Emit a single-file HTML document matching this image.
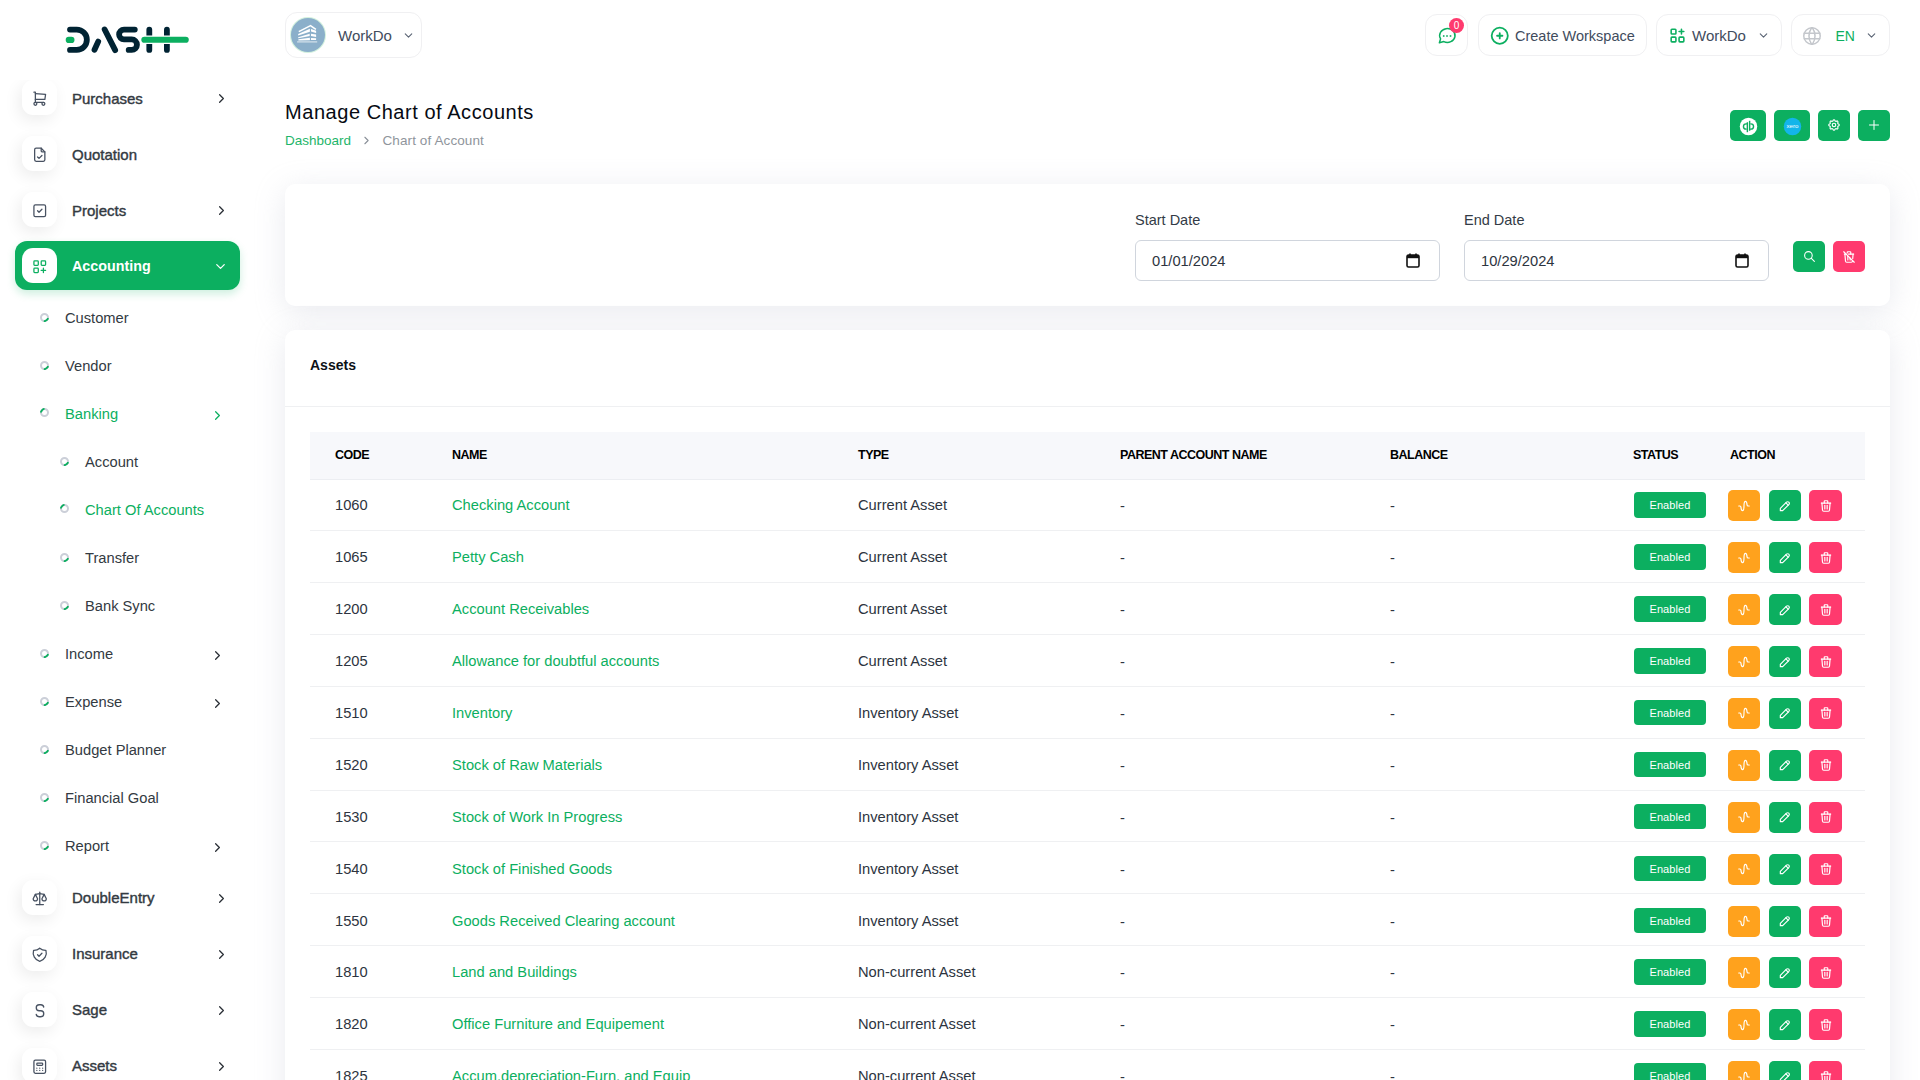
<!DOCTYPE html>
<html><head><meta charset="utf-8">
<style>
*,*:before,*:after{box-sizing:border-box;margin:0;padding:0}
html,body{width:1920px;height:1080px;overflow:hidden}
body{font-family:"Liberation Sans",sans-serif;background:#fff;color:#293240;position:relative;font-size:14px}
.abs{position:absolute}
svg.ti{fill:none;stroke:currentColor;stroke-width:2;stroke-linecap:round;stroke-linejoin:round}
/* sidebar */
#nav{position:absolute;left:0;top:80px;width:270px;height:1000px;overflow:hidden}
.ib{position:absolute;left:22px;width:35px;height:35px;border-radius:11px;background:#fff;box-shadow:-3px 5px 16px rgba(0,0,0,.075);display:flex;align-items:center;justify-content:center;color:#485262}
.tl{position:absolute;left:72px;font-size:15px;font-weight:400;-webkit-text-stroke:.4px currentColor;color:#333a42;white-space:nowrap}
.chev{position:absolute;left:214px;width:15px;height:15px;color:#2a2f36}
.sub{position:absolute;font-size:14.7px;color:#333a42;white-space:nowrap}
.bul{position:absolute;width:9px;height:9px;border-radius:50%;border:2px solid #cbcfd8}
.bul:after{content:"";position:absolute;left:-2px;top:-2px;width:9px;height:9px;border-radius:50%;border:2px solid transparent;border-bottom-color:#0caf60;transform:rotate(-35deg)}
.bul.act:after{transform:rotate(135deg)}
/* header */
.hbox{position:absolute;background:#fff;border:1px solid #f0f0f2;border-radius:12px}
.htxt{position:absolute;font-size:14.5px;color:#414c5d;white-space:nowrap}
/* cards */
.card{position:absolute;left:285px;width:1605px;background:#fff;border-radius:10px;box-shadow:0 6px 30px rgba(182,186,203,.3)}
.gbtn{position:absolute;background:#0caf60;border-radius:5px;color:#fff;display:flex;align-items:center;justify-content:center}
.lbl{position:absolute;font-size:14.5px;color:#333b46;white-space:nowrap}
.inp{position:absolute;top:240px;width:305px;height:41px;border:1px solid #d0d5dd;border-radius:6px;background:#fff}
.inp span{position:absolute;left:16px;top:12px;font-size:14.7px;color:#2d3440}
.inp svg{position:absolute;right:19px;top:12px}
/* table */
.th{position:absolute;top:448px;font-size:12.5px;font-weight:700;color:#000;white-space:nowrap;letter-spacing:-.5px}
.row{position:absolute;left:310px;width:1555px;height:51.8px;border-bottom:1px solid #eff0f2}
.row .c{position:absolute;top:18px;font-size:14.7px;white-space:nowrap;color:#2d3440}
.row .nm{color:#0caf60}
.badge{position:absolute;left:1324px;top:13px;width:72px;height:25.5px;border-radius:4px;background:#0caf60;color:#fff;font-size:11px;text-align:center;line-height:26.5px;letter-spacing:.1px}
.ab{position:absolute;top:11px;width:32px;height:31px;border-radius:5px;display:flex;align-items:center;justify-content:center;color:#fff}
</style></head><body>

<!-- LOGO -->
<svg class="abs" style="left:60px;top:20px" width="140" height="40" viewBox="60 20 140 40">
  <g fill="none" stroke="#002333" stroke-width="5.8" stroke-linecap="round">
    <path d="M70 29.6H76.7A10.15 10.15 0 0 1 76.7 49.9H70"/>
    <path d="M94.5 49.8L98.2 41.6"/>
    <path d="M104.65 29.45L115.15 50.1"/>
    <path d="M134.8 29.6H124A4.9 4.9 0 0 0 124 39.4H131.7A5.25 5.25 0 0 1 131.7 49.9H128.7"/>
    <path d="M149.3 29.65V49.9"/>
    <path d="M166.9 29.65V49.9"/>
  </g>
  <path d="M144.4 39.75H185.7" stroke="#fff" stroke-width="8.6"/>
  <g stroke="#0caf60" stroke-width="6.2" stroke-linecap="round">
    <path d="M68.8 39.9h2.6"/>
    <path d="M144.4 39.75H185.7"/>
  </g>
</svg>

<!-- SIDEBAR NAV -->
<div id="nav">
  <!-- coordinates inside are relative to top:80 -->
  <div class="ib" style="top:0px"><svg class="ti" width="17.5" height="17.5" viewBox="0 0 24 24" style="stroke-width:1.75;margin-top:2px"><circle cx="6" cy="19" r="2"/><circle cx="17" cy="19" r="2"/><path d="M17 17h-11v-14h-2"/><path d="M6 5l14 1l-1 7h-13"/></svg></div>
  <div class="tl" style="top:10px">Purchases</div>
  <svg class="ti chev" style="top:11px" viewBox="0 0 24 24"><path d="M9 6l6 6l-6 6"/></svg>

  <div class="ib" style="top:56px"><svg class="ti" width="17.5" height="17.5" viewBox="0 0 24 24" style="stroke-width:1.75;margin-top:2px"><path d="M14 3v4a1 1 0 0 0 1 1h4"/><path d="M17 21h-10a2 2 0 0 1 -2 -2v-14a2 2 0 0 1 2 -2h7l5 5v11a2 2 0 0 1 -2 2z"/><path d="M9 15l2 2l4 -4"/></svg></div>
  <div class="tl" style="top:66px">Quotation</div>

  <div class="ib" style="top:112px"><svg class="ti" width="17.5" height="17.5" viewBox="0 0 24 24" style="stroke-width:1.75;margin-top:2px"><rect x="4" y="4" width="16" height="16" rx="2"/><path d="M9 12l2 2l4 -4"/></svg></div>
  <div class="tl" style="top:122px">Projects</div>
  <svg class="ti chev" style="top:123px" viewBox="0 0 24 24"><path d="M9 6l6 6l-6 6"/></svg>

  <div class="abs" style="left:15px;top:161px;width:225px;height:49px;border-radius:12px;background:#0caf60;box-shadow:0 4px 8px rgba(12,175,96,.2)"></div>
  <div class="ib" style="top:168px;box-shadow:none;color:#0caf60"><svg class="ti" width="17.5" height="17.5" viewBox="0 0 24 24" style="stroke-width:1.75;margin-top:2px"><rect x="4" y="4" width="6" height="6" rx="1"/><rect x="14" y="4" width="6" height="6" rx="1"/><rect x="4" y="14" width="6" height="6" rx="1"/><path d="M14 17h6m-3 -3v6"/></svg></div>
  <div class="tl" style="top:177.5px;color:#fff;font-weight:700;font-size:14.3px;-webkit-text-stroke:0">Accounting</div>
  <svg class="ti chev" style="top:178.5px;left:213px;color:#fff" viewBox="0 0 24 24"><path d="M6 9l6 6l6 -6"/></svg>
  <div class="bul" style="left:40px;top:233px"></div>
  <div class="sub" style="left:65px;top:230px;">Customer</div>
  <div class="bul" style="left:40px;top:281px"></div>
  <div class="sub" style="left:65px;top:278px;">Vendor</div>
  <div class="bul act" style="left:40px;top:328px"></div>
  <div class="sub" style="left:65px;top:326px;color:#0caf60;">Banking</div>
  <svg class="ti chev" style="left:210px;top:328px;color:#0caf60;" viewBox="0 0 24 24"><path d="M9 6l6 6l-6 6"/></svg>
  <div class="bul" style="left:60px;top:377px"></div>
  <div class="sub" style="left:85px;top:374px;">Account</div>
  <div class="bul act" style="left:60px;top:424px"></div>
  <div class="sub" style="left:85px;top:422px;color:#0caf60;">Chart Of Accounts</div>
  <div class="bul" style="left:60px;top:473px"></div>
  <div class="sub" style="left:85px;top:470px;">Transfer</div>
  <div class="bul" style="left:60px;top:521px"></div>
  <div class="sub" style="left:85px;top:518px;">Bank Sync</div>
  <div class="bul" style="left:40px;top:569px"></div>
  <div class="sub" style="left:65px;top:566px;">Income</div>
  <svg class="ti chev" style="left:210px;top:568px;" viewBox="0 0 24 24"><path d="M9 6l6 6l-6 6"/></svg>
  <div class="bul" style="left:40px;top:617px"></div>
  <div class="sub" style="left:65px;top:614px;">Expense</div>
  <svg class="ti chev" style="left:210px;top:616px;" viewBox="0 0 24 24"><path d="M9 6l6 6l-6 6"/></svg>
  <div class="bul" style="left:40px;top:665px"></div>
  <div class="sub" style="left:65px;top:662px;">Budget Planner</div>
  <div class="bul" style="left:40px;top:713px"></div>
  <div class="sub" style="left:65px;top:710px;">Financial Goal</div>
  <div class="bul" style="left:40px;top:761px"></div>
  <div class="sub" style="left:65px;top:758px;">Report</div>
  <svg class="ti chev" style="left:210px;top:760px;" viewBox="0 0 24 24"><path d="M9 6l6 6l-6 6"/></svg>
  <div class="ib" style="top:800px"><svg class="ti" width="17.5" height="17.5" viewBox="0 0 24 24" style="stroke-width:1.75;margin-top:2px"><path d="M7 20l10 0"/><path d="M6 6l6 -1l6 1"/><path d="M12 3l0 17"/><path d="M9 12l-3 -6l-3 6a3 3 0 0 0 6 0"/><path d="M21 12l-3 -6l-3 6a3 3 0 0 0 6 0"/></svg></div>
  <div class="tl" style="top:809px">DoubleEntry</div>
  <svg class="ti chev" style="top:811px" viewBox="0 0 24 24"><path d="M9 6l6 6l-6 6"/></svg>
  <div class="ib" style="top:856px"><svg class="ti" width="17.5" height="17.5" viewBox="0 0 24 24" style="stroke-width:1.75;margin-top:2px"><path d="M9 12l2 2l4 -4"/><path d="M12 3a12 12 0 0 0 8.5 3a12 12 0 0 1 -8.5 15a12 12 0 0 1 -8.5 -15a12 12 0 0 0 8.5 -3"/></svg></div>
  <div class="tl" style="top:865px">Insurance</div>
  <svg class="ti chev" style="top:867px" viewBox="0 0 24 24"><path d="M9 6l6 6l-6 6"/></svg>
  <div class="ib" style="top:912px"><svg class="ti" width="18" height="18" viewBox="0 0 24 24" style="stroke-width:1.75;margin-top:0"><path d="M17 8a4 4 0 0 0 -4 -3h-2a4 4 0 0 0 0 8h2a4 4 0 0 1 0 8h-2a4 4 0 0 1 -4 -3"/></svg></div>
  <div class="tl" style="top:921px">Sage</div>
  <svg class="ti chev" style="top:923px" viewBox="0 0 24 24"><path d="M9 6l6 6l-6 6"/></svg>
  <div class="ib" style="top:968px"><svg class="ti" width="17.5" height="17.5" viewBox="0 0 24 24" style="stroke-width:1.75;margin-top:2px"><rect x="4" y="3" width="16" height="18" rx="2"/><rect x="8" y="7" width="8" height="3" rx="1"/><path d="M8 14v.01M12 14v.01M16 14v.01M8 17v.01M12 17v.01M16 17v.01"/></svg></div>
  <div class="tl" style="top:977px">Assets</div>
  <svg class="ti chev" style="top:979px" viewBox="0 0 24 24"><path d="M9 6l6 6l-6 6"/></svg>
</div>


<div class="hbox" style="left:285px;top:12px;width:137px;height:46px"></div>
<div class="abs" style="left:291px;top:18px;width:34px;height:34px;border-radius:50%;background:#8bafca;box-shadow:0 0 0 1px #d3f1de"></div>
<svg class="abs" style="left:285px;top:12px" width="50" height="46" viewBox="0 0 50 46"><g fill="#fff"><polyline points="13.8,19.6 25.5,13.6 30.9,17.3" fill="none" stroke="#fff" stroke-width="1.6" stroke-linejoin="round"/><polygon points="13.2,22.0 24.9,16.8 24.9,19.7 13.2,23.6"/><polygon points="13.2,25.2 24.7,21.8 24.7,24.0 13.2,26.2"/><polygon points="13.4,27.2 24.9,25.7 24.9,28.2 13.4,28.4"/><polygon points="26,17 31.1,18.7 31.1,21.1 26,19.4"/><polygon points="26,21.7 31.1,22.6 31.1,24.9 26,23.9"/><polygon points="26,26 31.1,26.2 31.1,28.1 26,28.1"/><rect x="12.1" y="29" width="20.1" height="1.7" fill="rgba(255,255,255,.45)"/></g></svg>
<div class="htxt" style="left:338px;top:27px;font-size:15px">WorkDo</div>
<svg class="ti abs" style="left:402px;top:29px;color:#5a6474" width="13" height="13" viewBox="0 0 24 24"><path d="M6 9l6 6l6 -6"/></svg>

<div class="hbox" style="left:1425px;top:14px;width:43px;height:42px"></div>
<svg class="abs" style="left:1437px;top:26px" width="20" height="20" viewBox="0 0 20 20"><path d="M3.6 12.8A7.7 6.9 0 1 1 6.8 15.6L2.4 16.7Z" fill="none" stroke="#0caf60" stroke-width="1.5" stroke-linejoin="round"/><g fill="#0caf60"><rect x="5.9" y="9.2" width="1.6" height="1.6"/><rect x="9.2" y="9.2" width="1.6" height="1.6"/><rect x="12.7" y="9.2" width="1.6" height="1.6"/></g></svg>
<div class="abs" style="left:1449px;top:17.5px;width:15px;height:15px;border-radius:50%;background:#ff3a6e;color:#fff;font-size:10px;text-align:center;line-height:15px">0</div>

<div class="hbox" style="left:1477.5px;top:14px;width:169px;height:42px"></div>
<svg class="ti abs" style="left:1488.5px;top:25px;color:#0caf60" width="21.5" height="21.5" viewBox="0 0 24 24"><circle cx="12" cy="12" r="9"/><path d="M9 12h6M12 9v6"/></svg>
<div class="htxt" style="left:1515px;top:27.5px">Create Workspace</div>

<div class="hbox" style="left:1656px;top:14px;width:125.5px;height:42px"></div>
<svg class="ti abs" style="left:1667.5px;top:26px;color:#0caf60" width="19" height="19" viewBox="0 0 24 24"><rect x="4" y="4" width="6" height="6" rx="1"/><rect x="14" y="4" width="6" height="6" rx="1" style="display:none"/><rect x="4" y="14" width="6" height="6" rx="1"/><rect x="14" y="14" width="6" height="6" rx="1"/><path d="M14 7h6m-3 -3v6"/></svg>
<div class="htxt" style="left:1692px;top:27px;font-size:15px">WorkDo</div>
<svg class="ti abs" style="left:1756.5px;top:29px;color:#5a6474" width="13" height="13" viewBox="0 0 24 24"><path d="M6 9l6 6l6 -6"/></svg>

<div class="hbox" style="left:1790.5px;top:14px;width:99px;height:42px"></div>
<svg class="ti abs" style="left:1801px;top:25px;color:#c4c7cc;stroke-width:1.6" width="22" height="22" viewBox="0 0 24 24"><circle cx="12" cy="12" r="9"/><path d="M3.6 9h16.8M3.6 15h16.8"/><path d="M11.5 3a17 17 0 0 0 0 18M12.5 3a17 17 0 0 1 0 18"/></svg>
<div class="htxt" style="left:1835.5px;top:27.5px;color:#0caf60;font-size:14px">EN</div>
<svg class="ti abs" style="left:1864.5px;top:29px;color:#5a6474" width="13" height="13" viewBox="0 0 24 24"><path d="M6 9l6 6l6 -6"/></svg>

<!-- title -->
<div class="abs" style="left:285px;top:101px;font-size:20px;color:#060a12;white-space:nowrap;letter-spacing:.55px">Manage Chart of Accounts</div>
<div class="abs" style="left:285px;top:133px;font-size:13.5px;color:#1eb56a;white-space:nowrap">Dashboard</div>
<svg class="ti abs" style="left:360px;top:134px;color:#8a9099" width="13" height="13" viewBox="0 0 24 24"><path d="M9 6l6 6l-6 6"/></svg>
<div class="abs" style="left:382.5px;top:133px;font-size:13.5px;color:#8f959c;white-space:nowrap;letter-spacing:.1px">Chart of Account</div>

<div class="gbtn" style="left:1730px;top:110px;width:36px;height:31px"><svg width="19" height="19" viewBox="0 0 20 20" style="margin-top:2px"><circle cx="10" cy="10" r="9.2" fill="#fff"/><g fill="none" stroke="#0caf60" stroke-width="1.5"><path d="M8.8 5.5v10.5"/><path d="M8.8 7.2h-1.3a2.8 2.8 0 0 0 0 5.6h.6"/><path d="M11.2 14.5v-10.5"/><path d="M11.2 12.8h1.3a2.8 2.8 0 0 0 0 -5.6h-.6"/></g></svg></div>
<div class="gbtn" style="left:1774px;top:110px;width:36px;height:31px"><svg width="19" height="19" viewBox="0 0 20 20" style="margin-top:2px"><circle cx="10" cy="10" r="9.2" fill="#13b5ea"/><text x="10" y="12" font-size="6.5" fill="#fff" text-anchor="middle" font-family="Liberation Sans">xero</text></svg></div>
<div class="gbtn" style="left:1818px;top:110px;width:32px;height:31px"><svg class="ti" width="14" height="14" viewBox="0 0 24 24" style="margin-top:-1px"><path d="M10.325 4.317c.426 -1.756 2.924 -1.756 3.35 0a1.724 1.724 0 0 0 2.573 1.066c1.543 -.94 3.31 .826 2.37 2.37a1.724 1.724 0 0 0 1.065 2.572c1.756 .426 1.756 2.924 0 3.35a1.724 1.724 0 0 0 -1.066 2.573c.94 1.543 -.826 3.31 -2.37 2.37a1.724 1.724 0 0 0 -2.572 1.065c-.426 1.756 -2.924 1.756 -3.35 0a1.724 1.724 0 0 0 -2.573 -1.066c-1.543 .94 -3.31 -.826 -2.37 -2.37a1.724 1.724 0 0 0 -1.065 -2.572c-1.756 -.426 -1.756 -2.924 0 -3.35a1.724 1.724 0 0 0 1.066 -2.573c-.94 -1.543 .826 -3.31 2.37 -2.37c1 .608 2.296 .07 2.572 -1.065z"/><circle cx="12" cy="12" r="3"/></svg></div>
<div class="gbtn" style="left:1858px;top:110px;width:32px;height:31px"><svg class="ti" width="12" height="12" viewBox="0 0 24 24" style="margin-top:-1px"><path d="M12 3v18M3 12h18"/></svg></div>

<!-- filter card -->
<div class="card" style="top:184px;height:122px"></div>
<div class="lbl" style="left:1135px;top:212px">Start Date</div>
<div class="lbl" style="left:1464px;top:212px">End Date</div>
<div class="inp" style="left:1135px"><span>01/01/2024</span><svg width="14" height="15" viewBox="0 0 14 15"><rect x="1" y="2" width="12" height="12" rx="1.5" fill="none" stroke="#111" stroke-width="1.6"/><rect x="1" y="2" width="12" height="3.2" fill="#111"/><rect x="3.2" y="0.5" width="1.6" height="3" fill="#111"/><rect x="9.2" y="0.5" width="1.6" height="3" fill="#111"/></svg></div>
<div class="inp" style="left:1464px"><span>10/29/2024</span><svg width="14" height="15" viewBox="0 0 14 15"><rect x="1" y="2" width="12" height="12" rx="1.5" fill="none" stroke="#111" stroke-width="1.6"/><rect x="1" y="2" width="12" height="3.2" fill="#111"/><rect x="3.2" y="0.5" width="1.6" height="3" fill="#111"/><rect x="9.2" y="0.5" width="1.6" height="3" fill="#111"/></svg></div>
<div class="gbtn" style="left:1793px;top:241px;width:32px;height:31px"><svg class="ti" width="13" height="13" viewBox="0 0 24 24"><circle cx="10" cy="10" r="7"/><path d="M21 21l-6 -6"/></svg></div>
<div class="gbtn" style="left:1833px;top:241px;width:32px;height:31px;background:#ff3a6e"><svg class="ti" width="14" height="14" viewBox="0 0 24 24"><path d="M3 3l18 18"/><path d="M4 7h3m4 0h9"/><path d="M10 11l0 6"/><path d="M14 14l0 3"/><path d="M5 7l1 12a2 2 0 0 0 2 2h8a2 2 0 0 0 2 -2l.077 -.923"/><path d="M18.384 14.373l.616 -7.373"/><path d="M9 5v-1a1 1 0 0 1 1 -1h4a1 1 0 0 1 1 1v3"/></svg></div>

<!-- assets card -->
<div class="card" style="top:330px;height:800px"></div>
<div class="abs" style="left:310px;top:356px;font-size:14px;font-weight:700;color:#0d1117;white-space:nowrap;top:357px">Assets</div>
<div class="abs" style="left:285px;top:406px;width:1605px;height:1px;background:#eff0f2"></div>
<div class="abs" style="left:310px;top:432px;width:1555px;height:47.5px;background:#f7f8fb;border-bottom:1px solid #eceef2"></div>
<div class="th" style="left:335px">CODE</div>
<div class="th" style="left:452px">NAME</div>
<div class="th" style="left:858px">TYPE</div>
<div class="th" style="left:1120px">PARENT ACCOUNT NAME</div>
<div class="th" style="left:1390px">BALANCE</div>
<div class="th" style="left:1633px">STATUS</div>
<div class="th" style="left:1730px">ACTION</div>
<div class="row" style="top:479.3px"><span class="c" style="left:25px">1060</span><span class="c nm" style="left:142px">Checking Account</span><span class="c" style="left:548px">Current Asset</span><span class="c" style="left:810px;top:19px">-</span><span class="c" style="left:1080px;top:19px">-</span><div class="badge">Enabled</div><div class="ab" style="left:1418px;background:#ffa21d"><svg class="ti" width="14" height="14" viewBox="0 0 24 24"><path d="M21 12h-2c-.894 0 -1.662 -.857 -1.761 -2c-.296 -3.45 -.749 -6 -2.749 -6s-2.5 3.582 -2.5 8s-.5 8 -2.5 8s-2.452 -2.547 -2.749 -6c-.1 -1.147 -.867 -2 -1.763 -2h-2"/></svg></div><div class="ab" style="left:1459px;background:#0caf60"><svg class="ti" width="14" height="14" viewBox="0 0 24 24"><path d="M4 20h4l10.5 -10.5a1.5 1.5 0 0 0 -4 -4l-10.5 10.5v4"/><path d="M13.5 6.5l4 4"/></svg></div><div class="ab" style="left:1499px;width:33px;background:#ff3a6e"><svg class="ti" width="14" height="14" viewBox="0 0 24 24"><path d="M4 7l16 0"/><path d="M10 11l0 6"/><path d="M14 11l0 6"/><path d="M5 7l1 12a2 2 0 0 0 2 2h8a2 2 0 0 0 2 -2l1 -12"/><path d="M9 7v-3a1 1 0 0 1 1 -1h4a1 1 0 0 1 1 1v3"/></svg></div></div>
<div class="row" style="top:531.2px"><span class="c" style="left:25px">1065</span><span class="c nm" style="left:142px">Petty Cash</span><span class="c" style="left:548px">Current Asset</span><span class="c" style="left:810px;top:19px">-</span><span class="c" style="left:1080px;top:19px">-</span><div class="badge">Enabled</div><div class="ab" style="left:1418px;background:#ffa21d"><svg class="ti" width="14" height="14" viewBox="0 0 24 24"><path d="M21 12h-2c-.894 0 -1.662 -.857 -1.761 -2c-.296 -3.45 -.749 -6 -2.749 -6s-2.5 3.582 -2.5 8s-.5 8 -2.5 8s-2.452 -2.547 -2.749 -6c-.1 -1.147 -.867 -2 -1.763 -2h-2"/></svg></div><div class="ab" style="left:1459px;background:#0caf60"><svg class="ti" width="14" height="14" viewBox="0 0 24 24"><path d="M4 20h4l10.5 -10.5a1.5 1.5 0 0 0 -4 -4l-10.5 10.5v4"/><path d="M13.5 6.5l4 4"/></svg></div><div class="ab" style="left:1499px;width:33px;background:#ff3a6e"><svg class="ti" width="14" height="14" viewBox="0 0 24 24"><path d="M4 7l16 0"/><path d="M10 11l0 6"/><path d="M14 11l0 6"/><path d="M5 7l1 12a2 2 0 0 0 2 2h8a2 2 0 0 0 2 -2l1 -12"/><path d="M9 7v-3a1 1 0 0 1 1 -1h4a1 1 0 0 1 1 1v3"/></svg></div></div>
<div class="row" style="top:583.1px"><span class="c" style="left:25px">1200</span><span class="c nm" style="left:142px">Account Receivables</span><span class="c" style="left:548px">Current Asset</span><span class="c" style="left:810px;top:19px">-</span><span class="c" style="left:1080px;top:19px">-</span><div class="badge">Enabled</div><div class="ab" style="left:1418px;background:#ffa21d"><svg class="ti" width="14" height="14" viewBox="0 0 24 24"><path d="M21 12h-2c-.894 0 -1.662 -.857 -1.761 -2c-.296 -3.45 -.749 -6 -2.749 -6s-2.5 3.582 -2.5 8s-.5 8 -2.5 8s-2.452 -2.547 -2.749 -6c-.1 -1.147 -.867 -2 -1.763 -2h-2"/></svg></div><div class="ab" style="left:1459px;background:#0caf60"><svg class="ti" width="14" height="14" viewBox="0 0 24 24"><path d="M4 20h4l10.5 -10.5a1.5 1.5 0 0 0 -4 -4l-10.5 10.5v4"/><path d="M13.5 6.5l4 4"/></svg></div><div class="ab" style="left:1499px;width:33px;background:#ff3a6e"><svg class="ti" width="14" height="14" viewBox="0 0 24 24"><path d="M4 7l16 0"/><path d="M10 11l0 6"/><path d="M14 11l0 6"/><path d="M5 7l1 12a2 2 0 0 0 2 2h8a2 2 0 0 0 2 -2l1 -12"/><path d="M9 7v-3a1 1 0 0 1 1 -1h4a1 1 0 0 1 1 1v3"/></svg></div></div>
<div class="row" style="top:635.0px"><span class="c" style="left:25px">1205</span><span class="c nm" style="left:142px">Allowance for doubtful accounts</span><span class="c" style="left:548px">Current Asset</span><span class="c" style="left:810px;top:19px">-</span><span class="c" style="left:1080px;top:19px">-</span><div class="badge">Enabled</div><div class="ab" style="left:1418px;background:#ffa21d"><svg class="ti" width="14" height="14" viewBox="0 0 24 24"><path d="M21 12h-2c-.894 0 -1.662 -.857 -1.761 -2c-.296 -3.45 -.749 -6 -2.749 -6s-2.5 3.582 -2.5 8s-.5 8 -2.5 8s-2.452 -2.547 -2.749 -6c-.1 -1.147 -.867 -2 -1.763 -2h-2"/></svg></div><div class="ab" style="left:1459px;background:#0caf60"><svg class="ti" width="14" height="14" viewBox="0 0 24 24"><path d="M4 20h4l10.5 -10.5a1.5 1.5 0 0 0 -4 -4l-10.5 10.5v4"/><path d="M13.5 6.5l4 4"/></svg></div><div class="ab" style="left:1499px;width:33px;background:#ff3a6e"><svg class="ti" width="14" height="14" viewBox="0 0 24 24"><path d="M4 7l16 0"/><path d="M10 11l0 6"/><path d="M14 11l0 6"/><path d="M5 7l1 12a2 2 0 0 0 2 2h8a2 2 0 0 0 2 -2l1 -12"/><path d="M9 7v-3a1 1 0 0 1 1 -1h4a1 1 0 0 1 1 1v3"/></svg></div></div>
<div class="row" style="top:686.9px"><span class="c" style="left:25px">1510</span><span class="c nm" style="left:142px">Inventory</span><span class="c" style="left:548px">Inventory Asset</span><span class="c" style="left:810px;top:19px">-</span><span class="c" style="left:1080px;top:19px">-</span><div class="badge">Enabled</div><div class="ab" style="left:1418px;background:#ffa21d"><svg class="ti" width="14" height="14" viewBox="0 0 24 24"><path d="M21 12h-2c-.894 0 -1.662 -.857 -1.761 -2c-.296 -3.45 -.749 -6 -2.749 -6s-2.5 3.582 -2.5 8s-.5 8 -2.5 8s-2.452 -2.547 -2.749 -6c-.1 -1.147 -.867 -2 -1.763 -2h-2"/></svg></div><div class="ab" style="left:1459px;background:#0caf60"><svg class="ti" width="14" height="14" viewBox="0 0 24 24"><path d="M4 20h4l10.5 -10.5a1.5 1.5 0 0 0 -4 -4l-10.5 10.5v4"/><path d="M13.5 6.5l4 4"/></svg></div><div class="ab" style="left:1499px;width:33px;background:#ff3a6e"><svg class="ti" width="14" height="14" viewBox="0 0 24 24"><path d="M4 7l16 0"/><path d="M10 11l0 6"/><path d="M14 11l0 6"/><path d="M5 7l1 12a2 2 0 0 0 2 2h8a2 2 0 0 0 2 -2l1 -12"/><path d="M9 7v-3a1 1 0 0 1 1 -1h4a1 1 0 0 1 1 1v3"/></svg></div></div>
<div class="row" style="top:738.8px"><span class="c" style="left:25px">1520</span><span class="c nm" style="left:142px">Stock of Raw Materials</span><span class="c" style="left:548px">Inventory Asset</span><span class="c" style="left:810px;top:19px">-</span><span class="c" style="left:1080px;top:19px">-</span><div class="badge">Enabled</div><div class="ab" style="left:1418px;background:#ffa21d"><svg class="ti" width="14" height="14" viewBox="0 0 24 24"><path d="M21 12h-2c-.894 0 -1.662 -.857 -1.761 -2c-.296 -3.45 -.749 -6 -2.749 -6s-2.5 3.582 -2.5 8s-.5 8 -2.5 8s-2.452 -2.547 -2.749 -6c-.1 -1.147 -.867 -2 -1.763 -2h-2"/></svg></div><div class="ab" style="left:1459px;background:#0caf60"><svg class="ti" width="14" height="14" viewBox="0 0 24 24"><path d="M4 20h4l10.5 -10.5a1.5 1.5 0 0 0 -4 -4l-10.5 10.5v4"/><path d="M13.5 6.5l4 4"/></svg></div><div class="ab" style="left:1499px;width:33px;background:#ff3a6e"><svg class="ti" width="14" height="14" viewBox="0 0 24 24"><path d="M4 7l16 0"/><path d="M10 11l0 6"/><path d="M14 11l0 6"/><path d="M5 7l1 12a2 2 0 0 0 2 2h8a2 2 0 0 0 2 -2l1 -12"/><path d="M9 7v-3a1 1 0 0 1 1 -1h4a1 1 0 0 1 1 1v3"/></svg></div></div>
<div class="row" style="top:790.7px"><span class="c" style="left:25px">1530</span><span class="c nm" style="left:142px">Stock of Work In Progress</span><span class="c" style="left:548px">Inventory Asset</span><span class="c" style="left:810px;top:19px">-</span><span class="c" style="left:1080px;top:19px">-</span><div class="badge">Enabled</div><div class="ab" style="left:1418px;background:#ffa21d"><svg class="ti" width="14" height="14" viewBox="0 0 24 24"><path d="M21 12h-2c-.894 0 -1.662 -.857 -1.761 -2c-.296 -3.45 -.749 -6 -2.749 -6s-2.5 3.582 -2.5 8s-.5 8 -2.5 8s-2.452 -2.547 -2.749 -6c-.1 -1.147 -.867 -2 -1.763 -2h-2"/></svg></div><div class="ab" style="left:1459px;background:#0caf60"><svg class="ti" width="14" height="14" viewBox="0 0 24 24"><path d="M4 20h4l10.5 -10.5a1.5 1.5 0 0 0 -4 -4l-10.5 10.5v4"/><path d="M13.5 6.5l4 4"/></svg></div><div class="ab" style="left:1499px;width:33px;background:#ff3a6e"><svg class="ti" width="14" height="14" viewBox="0 0 24 24"><path d="M4 7l16 0"/><path d="M10 11l0 6"/><path d="M14 11l0 6"/><path d="M5 7l1 12a2 2 0 0 0 2 2h8a2 2 0 0 0 2 -2l1 -12"/><path d="M9 7v-3a1 1 0 0 1 1 -1h4a1 1 0 0 1 1 1v3"/></svg></div></div>
<div class="row" style="top:842.6px"><span class="c" style="left:25px">1540</span><span class="c nm" style="left:142px">Stock of Finished Goods</span><span class="c" style="left:548px">Inventory Asset</span><span class="c" style="left:810px;top:19px">-</span><span class="c" style="left:1080px;top:19px">-</span><div class="badge">Enabled</div><div class="ab" style="left:1418px;background:#ffa21d"><svg class="ti" width="14" height="14" viewBox="0 0 24 24"><path d="M21 12h-2c-.894 0 -1.662 -.857 -1.761 -2c-.296 -3.45 -.749 -6 -2.749 -6s-2.5 3.582 -2.5 8s-.5 8 -2.5 8s-2.452 -2.547 -2.749 -6c-.1 -1.147 -.867 -2 -1.763 -2h-2"/></svg></div><div class="ab" style="left:1459px;background:#0caf60"><svg class="ti" width="14" height="14" viewBox="0 0 24 24"><path d="M4 20h4l10.5 -10.5a1.5 1.5 0 0 0 -4 -4l-10.5 10.5v4"/><path d="M13.5 6.5l4 4"/></svg></div><div class="ab" style="left:1499px;width:33px;background:#ff3a6e"><svg class="ti" width="14" height="14" viewBox="0 0 24 24"><path d="M4 7l16 0"/><path d="M10 11l0 6"/><path d="M14 11l0 6"/><path d="M5 7l1 12a2 2 0 0 0 2 2h8a2 2 0 0 0 2 -2l1 -12"/><path d="M9 7v-3a1 1 0 0 1 1 -1h4a1 1 0 0 1 1 1v3"/></svg></div></div>
<div class="row" style="top:894.5px"><span class="c" style="left:25px">1550</span><span class="c nm" style="left:142px">Goods Received Clearing account</span><span class="c" style="left:548px">Inventory Asset</span><span class="c" style="left:810px;top:19px">-</span><span class="c" style="left:1080px;top:19px">-</span><div class="badge">Enabled</div><div class="ab" style="left:1418px;background:#ffa21d"><svg class="ti" width="14" height="14" viewBox="0 0 24 24"><path d="M21 12h-2c-.894 0 -1.662 -.857 -1.761 -2c-.296 -3.45 -.749 -6 -2.749 -6s-2.5 3.582 -2.5 8s-.5 8 -2.5 8s-2.452 -2.547 -2.749 -6c-.1 -1.147 -.867 -2 -1.763 -2h-2"/></svg></div><div class="ab" style="left:1459px;background:#0caf60"><svg class="ti" width="14" height="14" viewBox="0 0 24 24"><path d="M4 20h4l10.5 -10.5a1.5 1.5 0 0 0 -4 -4l-10.5 10.5v4"/><path d="M13.5 6.5l4 4"/></svg></div><div class="ab" style="left:1499px;width:33px;background:#ff3a6e"><svg class="ti" width="14" height="14" viewBox="0 0 24 24"><path d="M4 7l16 0"/><path d="M10 11l0 6"/><path d="M14 11l0 6"/><path d="M5 7l1 12a2 2 0 0 0 2 2h8a2 2 0 0 0 2 -2l1 -12"/><path d="M9 7v-3a1 1 0 0 1 1 -1h4a1 1 0 0 1 1 1v3"/></svg></div></div>
<div class="row" style="top:946.4px"><span class="c" style="left:25px">1810</span><span class="c nm" style="left:142px">Land and Buildings</span><span class="c" style="left:548px">Non-current Asset</span><span class="c" style="left:810px;top:19px">-</span><span class="c" style="left:1080px;top:19px">-</span><div class="badge">Enabled</div><div class="ab" style="left:1418px;background:#ffa21d"><svg class="ti" width="14" height="14" viewBox="0 0 24 24"><path d="M21 12h-2c-.894 0 -1.662 -.857 -1.761 -2c-.296 -3.45 -.749 -6 -2.749 -6s-2.5 3.582 -2.5 8s-.5 8 -2.5 8s-2.452 -2.547 -2.749 -6c-.1 -1.147 -.867 -2 -1.763 -2h-2"/></svg></div><div class="ab" style="left:1459px;background:#0caf60"><svg class="ti" width="14" height="14" viewBox="0 0 24 24"><path d="M4 20h4l10.5 -10.5a1.5 1.5 0 0 0 -4 -4l-10.5 10.5v4"/><path d="M13.5 6.5l4 4"/></svg></div><div class="ab" style="left:1499px;width:33px;background:#ff3a6e"><svg class="ti" width="14" height="14" viewBox="0 0 24 24"><path d="M4 7l16 0"/><path d="M10 11l0 6"/><path d="M14 11l0 6"/><path d="M5 7l1 12a2 2 0 0 0 2 2h8a2 2 0 0 0 2 -2l1 -12"/><path d="M9 7v-3a1 1 0 0 1 1 -1h4a1 1 0 0 1 1 1v3"/></svg></div></div>
<div class="row" style="top:998.3px"><span class="c" style="left:25px">1820</span><span class="c nm" style="left:142px">Office Furniture and Equipement</span><span class="c" style="left:548px">Non-current Asset</span><span class="c" style="left:810px;top:19px">-</span><span class="c" style="left:1080px;top:19px">-</span><div class="badge">Enabled</div><div class="ab" style="left:1418px;background:#ffa21d"><svg class="ti" width="14" height="14" viewBox="0 0 24 24"><path d="M21 12h-2c-.894 0 -1.662 -.857 -1.761 -2c-.296 -3.45 -.749 -6 -2.749 -6s-2.5 3.582 -2.5 8s-.5 8 -2.5 8s-2.452 -2.547 -2.749 -6c-.1 -1.147 -.867 -2 -1.763 -2h-2"/></svg></div><div class="ab" style="left:1459px;background:#0caf60"><svg class="ti" width="14" height="14" viewBox="0 0 24 24"><path d="M4 20h4l10.5 -10.5a1.5 1.5 0 0 0 -4 -4l-10.5 10.5v4"/><path d="M13.5 6.5l4 4"/></svg></div><div class="ab" style="left:1499px;width:33px;background:#ff3a6e"><svg class="ti" width="14" height="14" viewBox="0 0 24 24"><path d="M4 7l16 0"/><path d="M10 11l0 6"/><path d="M14 11l0 6"/><path d="M5 7l1 12a2 2 0 0 0 2 2h8a2 2 0 0 0 2 -2l1 -12"/><path d="M9 7v-3a1 1 0 0 1 1 -1h4a1 1 0 0 1 1 1v3"/></svg></div></div>
<div class="row" style="top:1050.2px"><span class="c" style="left:25px">1825</span><span class="c nm" style="left:142px">Accum.depreciation-Furn. and Equip</span><span class="c" style="left:548px">Non-current Asset</span><span class="c" style="left:810px;top:19px">-</span><span class="c" style="left:1080px;top:19px">-</span><div class="badge">Enabled</div><div class="ab" style="left:1418px;background:#ffa21d"><svg class="ti" width="14" height="14" viewBox="0 0 24 24"><path d="M21 12h-2c-.894 0 -1.662 -.857 -1.761 -2c-.296 -3.45 -.749 -6 -2.749 -6s-2.5 3.582 -2.5 8s-.5 8 -2.5 8s-2.452 -2.547 -2.749 -6c-.1 -1.147 -.867 -2 -1.763 -2h-2"/></svg></div><div class="ab" style="left:1459px;background:#0caf60"><svg class="ti" width="14" height="14" viewBox="0 0 24 24"><path d="M4 20h4l10.5 -10.5a1.5 1.5 0 0 0 -4 -4l-10.5 10.5v4"/><path d="M13.5 6.5l4 4"/></svg></div><div class="ab" style="left:1499px;width:33px;background:#ff3a6e"><svg class="ti" width="14" height="14" viewBox="0 0 24 24"><path d="M4 7l16 0"/><path d="M10 11l0 6"/><path d="M14 11l0 6"/><path d="M5 7l1 12a2 2 0 0 0 2 2h8a2 2 0 0 0 2 -2l1 -12"/><path d="M9 7v-3a1 1 0 0 1 1 -1h4a1 1 0 0 1 1 1v3"/></svg></div></div>


</body></html>
